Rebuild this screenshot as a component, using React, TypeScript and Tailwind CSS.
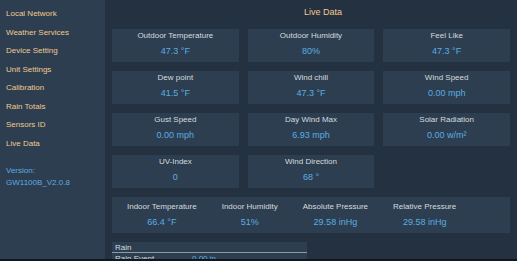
const menu = [
  "Local Network",
  "Weather Services",
  "Device Setting",
  "Unit Settings",
  "Calibration",
  "Rain Totals",
  "Sensors ID",
  "Live Data",
];

const cards: [string, string][] = [
  ["Outdoor Temperature", "47.3 °F"],
  ["Outdoor Humidity", "80%"],
  ["Feel Like", "47.3 °F"],
  ["Dew point", "41.5 °F"],
  ["Wind chill", "47.3 °F"],
  ["Wind Speed", "0.00 mph"],
  ["Gust Speed", "0.00 mph"],
  ["Day Wind Max", "6.93 mph"],
  ["Solar Radiation", "0.00 w/m²"],
  ["UV-Index", "0"],
  ["Wind Direction", "68 °"],
];

const indoor: [string, string][] = [
  ["Indoor Temperature", "66.4 °F"],
  ["Indoor Humidity", "51%"],
  ["Absolute Pressure", "29.58 inHg"],
  ["Relative Pressure", "29.58 inHg"],
];

export default function App() {
  return (
    <div className="flex h-[261px] w-[517px] overflow-hidden border-b-2 border-[#10171e] font-['Liberation_Sans',Arial,sans-serif]">
      <aside className="w-[105px] shrink-0 bg-[#2c3e50] pl-[6px] pt-[5px]">
        {menu.map((m) => (
          <div key={m} className="text-[8px] leading-[18.5px] text-[#f2c98f]">
            {m}
          </div>
        ))}
        <div className="mt-[12px] text-[8px] leading-[12px] text-[#5dade2]">
          <div>Version:</div>
          <div>GW1100B_V2.0.8</div>
        </div>
      </aside>

      <main className="flex-1 bg-[#233140] px-[7px]">
        <h1 className="pt-[6px] pb-[11px] pl-[24px] text-center text-[9px] leading-[12px] text-[#f2c98f]">
          Live Data
        </h1>

        <div className="grid grid-cols-3 gap-[9px]">
          {cards.map(([label, value]) => (
            <div key={label} className="flex h-[33px] flex-col items-center bg-[#2c3e50] pt-[2px]">
              <span className="text-[8px] leading-[10px] text-[#d6dbdf]">{label}</span>
              <span className="mt-[4px] text-[9px] leading-[12px] text-[#5dade2]">{value}</span>
            </div>
          ))}
        </div>

        <div className="mt-[9px] flex h-[36px] gap-[25px] bg-[#2c3e50] pl-[15px] pt-[5px]">
          {indoor.map(([label, value]) => (
            <div key={label} className="flex flex-col items-center">
              <span className="text-[8px] leading-[10px] text-[#d6dbdf]">{label}</span>
              <span className="mt-[4px] text-[9px] leading-[12px] text-[#5dade2]">{value}</span>
            </div>
          ))}
        </div>

        <div className="mt-[9px] w-[195px] bg-[#2c3e50] text-[8px]">
          <div className="h-[11px] border-b border-[#8d9aa6] pl-[3px] leading-[11px] text-[#d6dbdf]">Rain</div>
          <div className="flex pl-[3px] leading-[11px]">
            <span className="w-[77px] text-[#d6dbdf]">Rain Event</span>
            <span className="text-[#5dade2]">0.00 in</span>
          </div>
        </div>
      </main>
    </div>
  );
}
